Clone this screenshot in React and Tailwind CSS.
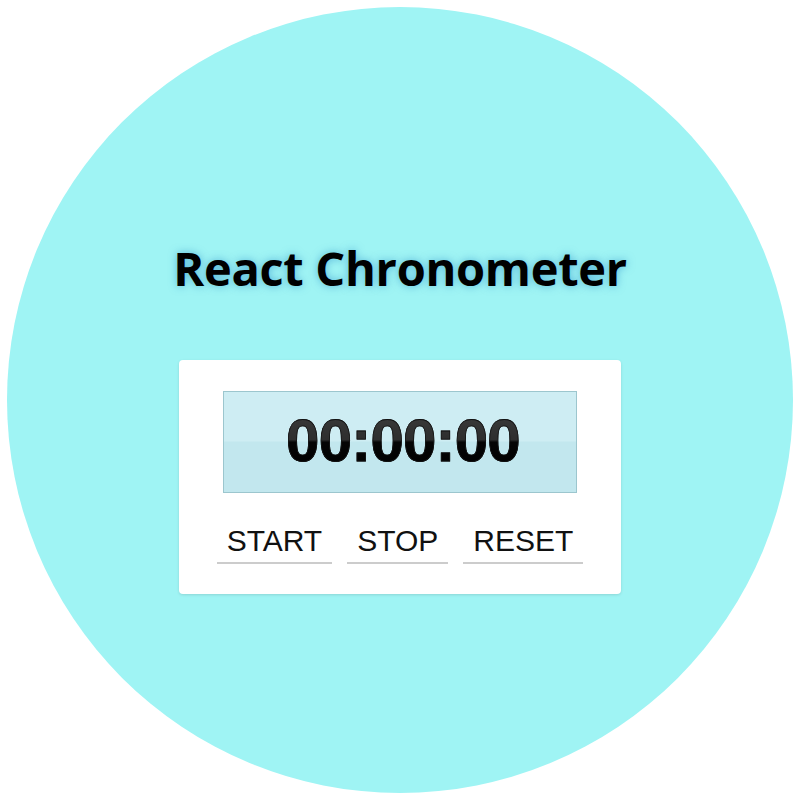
export default function App() {
  const buttons = ['START', 'STOP', 'RESET'];

  return (
    <div className="w-[800px] h-[800px] bg-white flex items-center justify-center">
      <div className="w-[786px] h-[786px] rounded-full bg-[#9ff4f4] flex flex-col items-center">
        <h1
          className="mt-[231px] text-[47px] leading-[60px] font-bold text-black tracking-[-0.3px] [text-shadow:0_0_8px_rgba(40,140,200,0.6)]"
          style={{ fontFamily: '"Open Sans", sans-serif' }}
        >
          React Chronometer
        </h1>

        <div className="mt-[62px] w-[442px] h-[234px] bg-white rounded-[4px] shadow-[0_1px_3px_rgba(0,0,0,0.12)] flex flex-col items-center pt-[31px]">
          <div className="w-[354px] h-[102px] border border-[#9cc6ce] bg-[linear-gradient(to_bottom,#ceedf3_0%,#ceedf3_49%,#c2e7ee_50%,#c2e7ee_100%)] flex items-center justify-center">
            <span
              className="mt-[-3px] ml-[6px] text-[60px] leading-none font-bold bg-[linear-gradient(to_bottom,#3b3b3b_0%,#2e2e2e_48%,#050505_52%,#000_100%)] bg-clip-text text-transparent tracking-[-0.8px] [-webkit-text-stroke:0.8px_#111]"
              style={{ fontFamily: '"Liberation Sans", Arial, sans-serif' }}
            >
              00:00:00
            </span>
          </div>

          <div className="mt-[31px] flex gap-[15px]">
            {buttons.map((label) => (
              <button
                key={label}
                className="px-[10px] pb-[5px] border-b-2 border-[#cccccc] text-[30px] leading-[33px] text-[#111]"
                style={{ fontFamily: '"Liberation Sans", Arial, sans-serif' }}
              >
                {label}
              </button>
            ))}
          </div>
        </div>
      </div>
    </div>
  );
}
